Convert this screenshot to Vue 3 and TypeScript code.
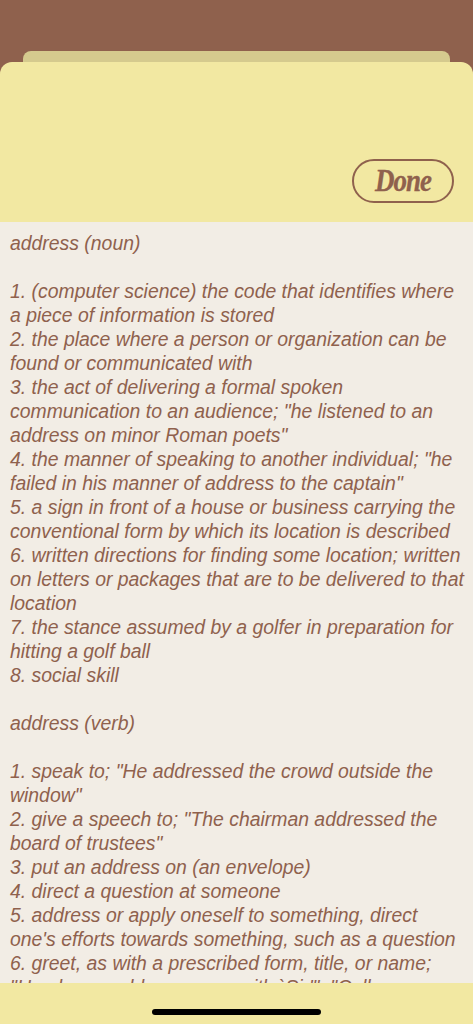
<script setup lang="ts">
const lines: string[] = [
  'address (noun)',
  '',
  '1. (computer science) the code that identifies where a piece of information is stored',
  '2. the place where a person or organization can be found or communicated with',
  '3. the act of delivering a formal spoken communication to an audience; "he listened to an address on minor Roman poets"',
  '4. the manner of speaking to another individual; "he failed in his manner of address to the captain"',
  '5. a sign in front of a house or business carrying the conventional form by which its location is described',
  '6. written directions for finding some location; written on letters or packages that are to be delivered to that location',
  '7. the stance assumed by a golfer in preparation for hitting a golf ball',
  '8. social skill',
  '',
  'address (verb)',
  '',
  '1. speak to; "He addressed the crowd outside the window"',
  '2. give a speech to; "The chairman addressed the board of trustees"',
  '3. put an address on (an envelope)',
  '4. direct a question at someone',
  '5. address or apply oneself to something, direct one\'s efforts towards something, such as a question',
  '6. greet, as with a prescribed form, title, or name; "He always addresses me with `Sir\'"; "Call me Mister"'
]
</script>

<template>
  <div class="page">
    <div class="back-card"></div>
    <header class="card">
      <button class="done" type="button"><span class="done-label">Done</span></button>
    </header>
    <main class="content">
      <p v-for="(line, i) in lines" :key="i" class="line">{{ line || '\u00a0' }}</p>
    </main>
    <footer class="footer">
      <div class="home"></div>
    </footer>
  </div>
</template>

<style scoped>
.page {
  width: 473px;
  height: 1024px;
  display: flex;
  flex-direction: column;
  background: #8f614d;
  padding-top: 51px;
  box-sizing: border-box;
  overflow: hidden;
}
.back-card {
  flex: none;
  height: 11px;
  margin: 0 23px;
  background: #d5ca8e;
  border-radius: 8px 8px 0 0;
}
.card {
  flex: none;
  height: 160px;
  box-sizing: border-box;
  background: #f2e8a2;
  border-radius: 12px 12px 0 0;
  display: flex;
  justify-content: flex-end;
  align-items: flex-end;
  padding: 0 19px 19px 0;
}
.done {
  width: 102px;
  height: 44px;
  box-sizing: border-box;
  padding: 0;
  border: 2px solid #8f614d;
  border-radius: 22px;
  background: transparent;
  color: #8f614d;
  font-family: "Liberation Serif", serif;
  font-style: italic;
  font-weight: 700;
  font-size: 27px;
  letter-spacing: -1px;
  -webkit-text-stroke: 0.3px #8f614d;
}
.done-label {
  display: inline-block;
  transform: scaleY(1.15);
}
.content {
  flex: 1;
  min-height: 0;
  overflow: hidden;
  background: #f2ede5;
  padding: 9px 8px 0 10px;
  font-family: "Liberation Sans", Arial, sans-serif;
  font-style: italic;
  font-size: 19.4px;
  line-height: 24px;
  color: #8f614d;
}
.line {
  margin: 0;
}
.footer {
  flex: none;
  height: 41.5px;
  background: #f2e8a2;
  display: flex;
  justify-content: center;
  padding-top: 26px;
  box-sizing: border-box;
}
.home {
  width: 169px;
  height: 6.5px;
  border-radius: 3.25px;
  background: #000;
}
</style>

<style>
body {
  margin: 0;
}
</style>
